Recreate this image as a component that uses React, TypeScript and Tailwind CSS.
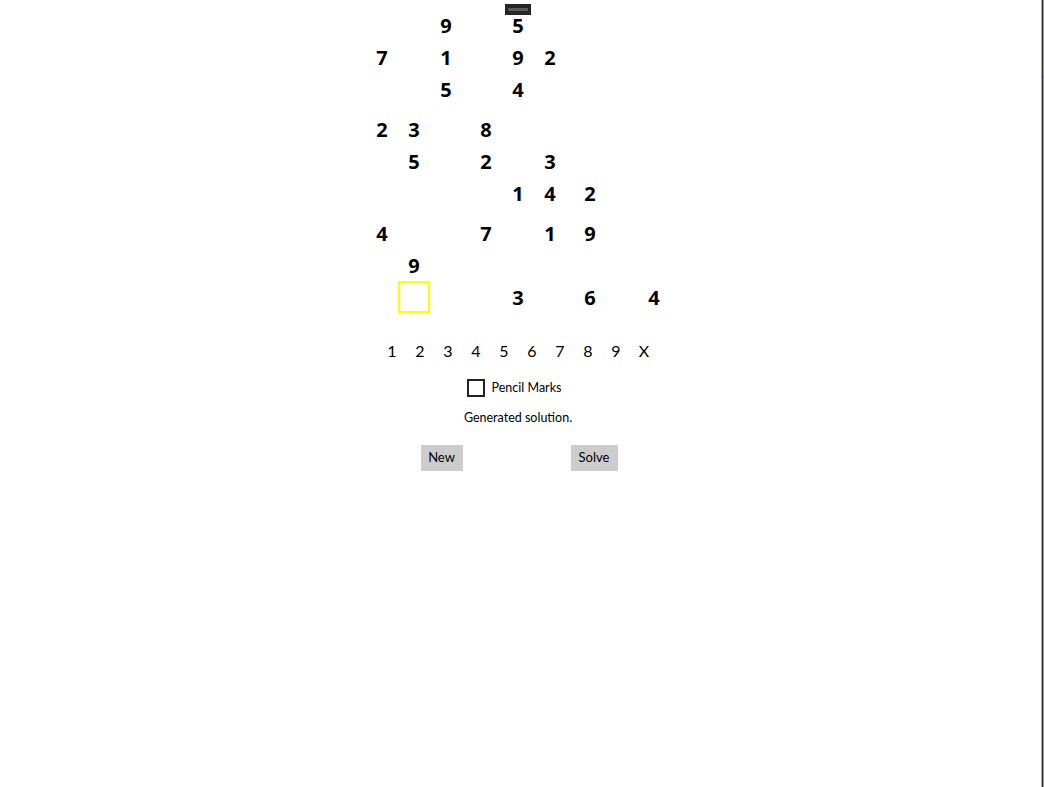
import React, { useState } from 'react';

const puzzle: number[][] = [
    [0, 0, 9, 0, 5, 0, 0, 0, 0],
    [7, 0, 1, 0, 9, 2, 0, 0, 0],
    [0, 0, 5, 0, 4, 0, 0, 0, 0],
    [2, 3, 0, 8, 0, 0, 0, 0, 0],
    [0, 5, 0, 2, 0, 3, 0, 0, 0],
    [0, 0, 0, 0, 1, 4, 2, 0, 0],
    [4, 0, 0, 7, 0, 1, 9, 0, 0],
    [0, 9, 0, 0, 0, 0, 0, 0, 0],
    [0, 0, 0, 0, 3, 0, 6, 0, 4],
];

const picks = ['1', '2', '3', '4', '5', '6', '7', '8', '9', 'X'];

function Cell({ value, selected }: { value: number; selected: boolean }) {
    return (
        <div
            className={`w-8 h-8 flex items-center justify-center text-[20px] font-bold text-black leading-none pt-[2px] ${
                selected ? 'border-2 border-[#ffff00]' : ''
            }`}
        >
            {value !== 0 ? value : ''}
        </div>
    );
}

export default function App() {
    const [pencil, setPencil] = useState(false);
    const selected = { r: 8, c: 1 };
    const ui = { fontFamily: 'Lato, "Open Sans", sans-serif' };

    return (
        <div
            className="w-[1044px] h-[787px] flex bg-white overflow-hidden"
            style={{ fontFamily: '"Open Sans", "Noto Sans", sans-serif' }}
        >
            <main className="relative w-[1036px] flex flex-col items-center">
                {/* drag handle / tooltip stub */}
                <div className="absolute left-[505px] top-[4px] w-[26px] h-[11px] bg-[#262626] flex items-center justify-center">
                    <div className="w-[20px] h-[3px] bg-[#5a5a5a]" />
                </div>

                <div className="mt-[9px] flex flex-col gap-2">
                    {[0, 1, 2].map((band) => (
                        <div key={band} className="flex flex-col">
                            {[0, 1, 2].map((ri) => {
                                const r = band * 3 + ri;
                                return (
                                    <div key={r} className="flex gap-2">
                                        {[0, 1, 2].map((stack) => (
                                            <div key={stack} className="flex">
                                                {[0, 1, 2].map((ci) => {
                                                    const c = stack * 3 + ci;
                                                    return (
                                                        <Cell
                                                            key={c}
                                                            value={puzzle[r][c]}
                                                            selected={r === selected.r && c === selected.c}
                                                        />
                                                    );
                                                })}
                                            </div>
                                        ))}
                                    </div>
                                );
                            })}
                        </div>
                    ))}
                </div>

                <div className="mt-[26px] flex" style={ui}>
                    {picks.map((p) => (
                        <div key={p} className="w-7 h-6 flex items-center justify-center text-[16px] text-black">
                            {p}
                        </div>
                    ))}
                </div>

                <label className="mt-[16px] h-[18px] flex items-center gap-[7px] ml-[-8px] cursor-pointer" style={ui}>
                    <span
                        onClick={() => setPencil(!pencil)}
                        className="w-[18px] h-[18px] border-2 border-[#222] bg-white"
                    />
                    <span className="text-[12.5px] text-black">Pencil Marks</span>
                </label>

                <p className="mt-[12px] h-[18px] leading-[18px] text-[12.5px] text-black" style={ui}>
                    Generated solution.
                </p>

                <div className="mt-[18px] flex gap-[108px] ml-[2px]" style={ui}>
                    <button className="h-[26px] w-[42px] bg-[#cccccc] text-[13px] text-black">New</button>
                    <button className="h-[26px] w-[47px] bg-[#cccccc] text-[13px] text-black">Solve</button>
                </div>
            </main>

            <div className="w-[5px]" />
            <div className="relative w-px bg-[#a8a8a8]" />
            <div className="w-px bg-[#2e2e2e]" />
            <div className="relative w-px bg-[#9a9a9a]">
                <div className="absolute top-[76px] left-0 w-px h-[2px] bg-[#7a6cff]" />
            </div>
        </div>
    );
}
